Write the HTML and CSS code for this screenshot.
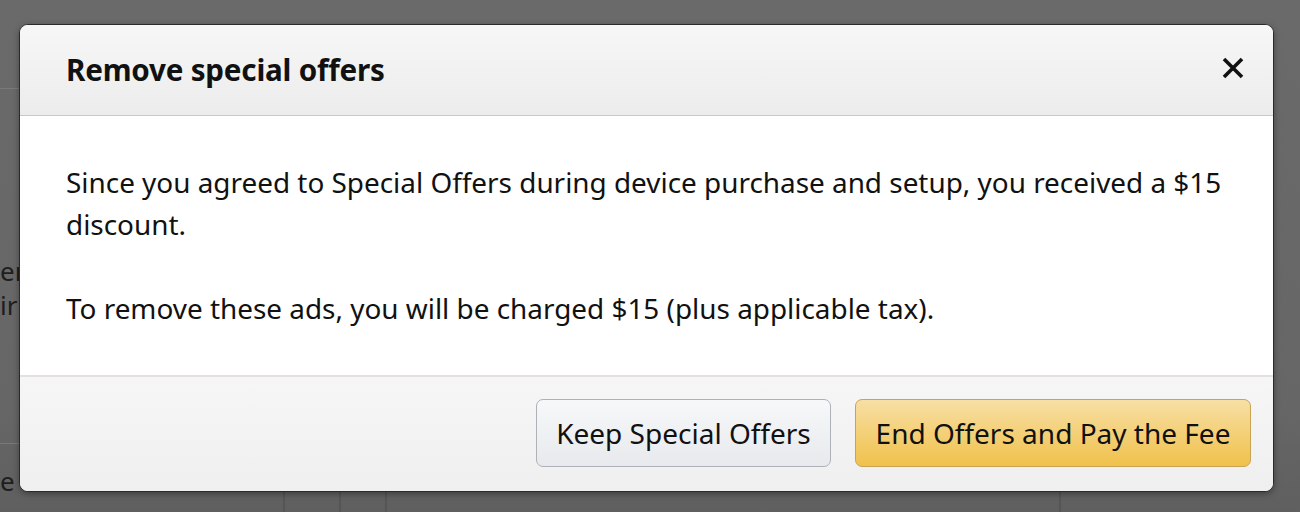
FILE: index.html
```html
<!DOCTYPE html>
<html lang="en">
<head>
<meta charset="utf-8">
<title>Remove special offers</title>
<link rel="stylesheet" href="styles.css">
</head>
<body>
<div class="backdrop">
  <div class="page-frag frag-top"></div>
  <div class="page-frag frag-line2"></div>
  <span class="frag-text t1">ers</span>
  <span class="frag-text t2">ir</span>
  <span class="frag-text t3">e</span>
  <div class="vline v1"></div>
  <div class="vline v2"></div>
  <div class="vline v3"></div>
  <div class="vline v4"></div>
</div>
<div class="modal" role="dialog">
  <header class="modal-header">
    <h2 class="modal-title">Remove special offers</h2>
    <button class="close" aria-label="Close">
      <svg width="24" height="24" viewBox="0 0 24 24"><path d="M3 3 L21 21 M21 3 L3 21" stroke="#111" stroke-width="3.6" stroke-linecap="butt" fill="none"/></svg>
    </button>
  </header>
  <div class="modal-body">
    <p>Since you agreed to Special Offers during device purchase and setup, you received a $15 discount.</p>
    <p>To remove these ads, you will be charged $15 (plus applicable tax).</p>
  </div>
  <footer class="modal-footer">
    <button class="btn btn-secondary">Keep Special Offers</button>
    <button class="btn btn-primary">End Offers and Pay the Fee</button>
  </footer>
</div>
</body>
</html>
```
FILE: styles.css
```css
html, body {
  margin: 0;
  padding: 0;
}
body {
  width: 1300px;
  height: 512px;
  overflow: hidden;
  background: #676767;
  font-family: "Noto Sans", "Open Sans", sans-serif;
  color: #111;
  position: relative;
}
.backdrop {
  position: absolute;
  inset: 0;
  background: linear-gradient(180deg, #6a6a6a 0%, #666 80%, #5f5f5f 100%);
}
.page-frag {
  position: absolute;
  left: 0;
  width: 20px;
  height: 1px;
  background: #7a7a7a;
}
.frag-top { top: 88px; }
.frag-line2 { top: 443px; }
.frag-text {
  position: absolute;
  font-size: 26px;
  color: #1e1e1e;
  line-height: 1;
}
.t1 { left: 0; top: 258px; }
.t2 { left: 0; top: 292px; }
.t3 { left: 0; top: 468px; }
.vline {
  position: absolute;
  top: 491px;
  bottom: 0;
  width: 2px;
  background: #555;
}
.v1 { left: 283px; }
.v2 { left: 339px; }
.v3 { left: 385px; }
.v4 { left: 1059px; }

.modal {
  position: absolute;
  left: 19px;
  top: 24px;
  width: 1253px;
  height: 466px;
  border: 1.5px solid #2a2a2a;
  border-radius: 9px;
  background: #fff;
  overflow: hidden;
  display: flex;
  flex-direction: column;
  box-shadow: 0 2px 6px rgba(0,0,0,0.35);
}
.modal-header {
  height: 91px;
  flex: none;
  box-sizing: border-box;
  display: flex;
  align-items: center;
  justify-content: space-between;
  padding: 0 28px 0 46px;
  background: linear-gradient(180deg, #f7f7f7 0%, #ececec 100%);
  border-bottom: 1px solid #c8c8c8;
}
.modal-title {
  margin: 0;
  font-size: 29.6px;
  font-weight: 700;
  letter-spacing: -0.2px;
  padding-bottom: 2px;
}
.close {
  background: none;
  border: 0;
  padding: 0;
  width: 24px;
  height: 24px;
  display: flex;
  cursor: pointer;
  margin-bottom: 4px;
}
.modal-body {
  flex: 1;
  padding: 45px 46px 0 46px;
  font-size: 27.9px;
  line-height: 42px;
}
.modal-body p {
  margin: 0 0 42px 0;
}
.modal-footer {
  height: 116px;
  flex: none;
  box-sizing: border-box;
  border-top: 2px solid #e3e0dd;
  background: linear-gradient(180deg, #f6f6f6 0%, #efefef 100%);
  display: flex;
  justify-content: flex-end;
  align-items: flex-start;
  gap: 24px;
  padding: 22px 22px 0 0;
}
.btn {
  height: 68px;
  box-sizing: border-box;
  border-radius: 7px;
  font-family: "Noto Sans", "Open Sans", sans-serif;
  font-size: 28px;
  color: #111;
  padding: 0 18px;
  cursor: pointer;
}
.btn-secondary {
  width: 295px;
  background: linear-gradient(180deg, #f7f8fa 0%, #e7e9ec 100%);
  border: 1px solid #adb1b8;
}
.btn-primary {
  width: 396px;
  background: linear-gradient(180deg, #f7dfa5 0%, #f0c14b 100%);
  border: 1px solid #c9a455;
}
```
